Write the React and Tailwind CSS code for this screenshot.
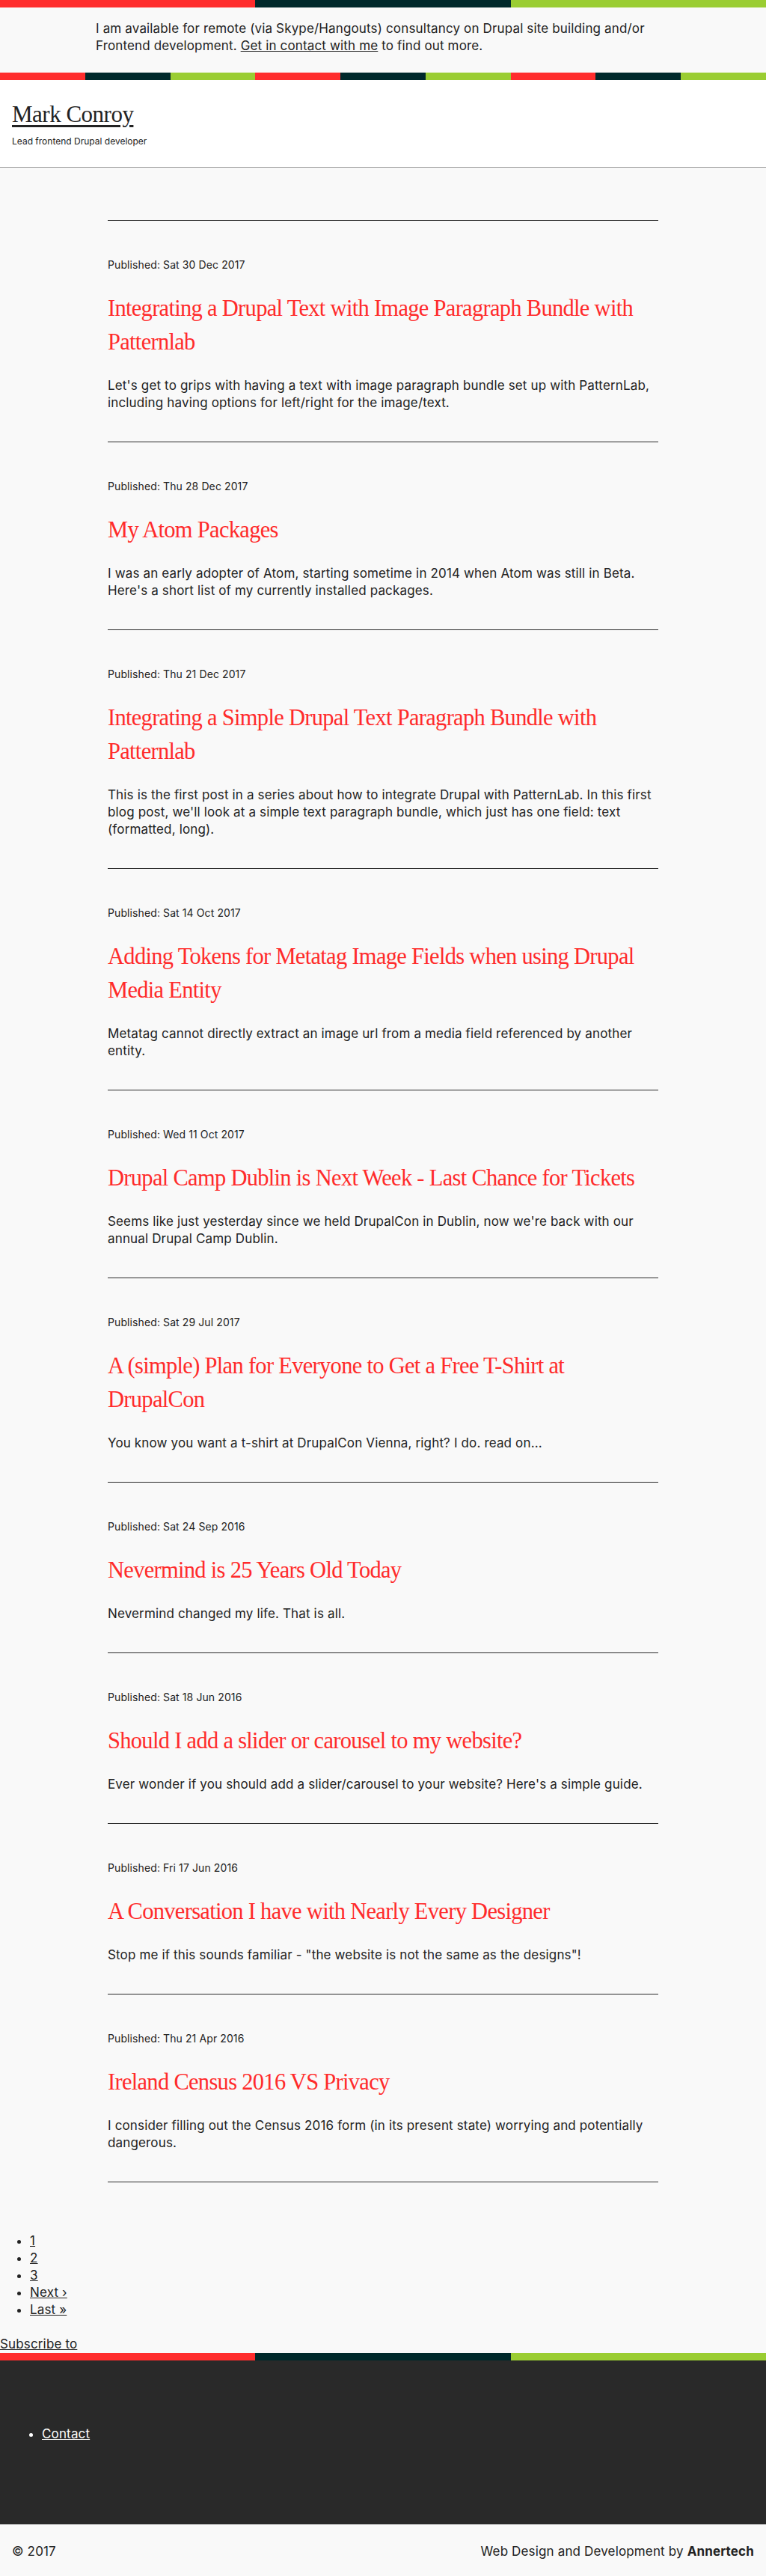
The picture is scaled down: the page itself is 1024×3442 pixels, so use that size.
import React from "react";

const articles = [
  {
    date: "Sat 30 Dec 2017",
    title: "Integrating a Drupal Text with Image Paragraph Bundle with Patternlab",
    body: [
      "Let's get to grips with having a text with image paragraph bundle set up with PatternLab,",
      "including having options for left/right for the image/text.",
    ],
  },
  {
    date: "Thu 28 Dec 2017",
    title: "My Atom Packages",
    body: [
      "I was an early adopter of Atom, starting sometime in 2014 when Atom was still in Beta.",
      "Here's a short list of my currently installed packages.",
    ],
  },
  {
    date: "Thu 21 Dec 2017",
    title: "Integrating a Simple Drupal Text Paragraph Bundle with Patternlab",
    body: [
      "This is the first post in a series about how to integrate Drupal with PatternLab. In this first",
      "blog post, we'll look at a simple text paragraph bundle, which just has one field: text",
      "(formatted, long).",
    ],
  },
  {
    date: "Sat 14 Oct 2017",
    title: "Adding Tokens for Metatag Image Fields when using Drupal Media Entity",
    body: [
      "Metatag cannot directly extract an image url from a media field referenced by another",
      "entity.",
    ],
  },
  {
    date: "Wed 11 Oct 2017",
    title: "Drupal Camp Dublin is Next Week - Last Chance for Tickets",
    body: [
      "Seems like just yesterday since we held DrupalCon in Dublin, now we're back with our",
      "annual Drupal Camp Dublin.",
    ],
  },
  {
    date: "Sat 29 Jul 2017",
    title: "A (simple) Plan for Everyone to Get a Free T-Shirt at DrupalCon",
    body: ["You know you want a t-shirt at DrupalCon Vienna, right? I do. read on..."],
  },
  {
    date: "Sat 24 Sep 2016",
    title: "Nevermind is 25 Years Old Today",
    body: ["Nevermind changed my life. That is all."],
  },
  {
    date: "Sat 18 Jun 2016",
    title: "Should I add a slider or carousel to my website?",
    body: ["Ever wonder if you should add a slider/carousel to your website? Here's a simple guide."],
  },
  {
    date: "Fri 17 Jun 2016",
    title: "A Conversation I have with Nearly Every Designer",
    body: ['Stop me if this sounds familiar - "the website is not the same as the designs"!'],
  },
  {
    date: "Thu 21 Apr 2016",
    title: "Ireland Census 2016 VS Privacy",
    body: [
      "I consider filling out the Census 2016 form (in its present state) worrying and potentially",
      "dangerous.",
    ],
  },
];

function Stripe3() {
  return (
    <div className="flex h-[10px]">
      <div className="flex-1 bg-[#ff2d2d]" />
      <div className="flex-1 bg-[#00292b]" />
      <div className="flex-1 bg-[#9acd32]" />
    </div>
  );
}

function Stripe9() {
  const cls = ["bg-[#ff2d2d]", "bg-[#00292b]", "bg-[#9acd32]"];
  return (
    <div className="grid h-[10px] grid-cols-9">
      {Array.from({ length: 9 }).map((_, i) => (
        <div key={i} className={cls[i % 3]} />
      ))}
    </div>
  );
}

export default function App() {
  return (
    <div className="bg-[#f9f9f9] font-['Inter','Liberation_Sans',sans-serif] text-[17px] leading-[23px] tracking-[0.15px] text-[#222]">
      <Stripe3 />
      <div className="h-[87px] pt-[17px]">
        <p className="mx-auto w-3/4">
          I am available for remote (via Skype/Hangouts) consultancy on Drupal site building and/or
          <br />
          Frontend development.{" "}
          <a href="#" className="underline">
            Get in contact with me
          </a>{" "}
          to find out more.
        </p>
      </div>
      <Stripe9 />
      <header className="h-[117px] border-b border-[#999] bg-white px-4 pt-[28px]">
        <a
          href="#"
          className="block w-fit font-['Liberation_Serif',serif] text-[31px] leading-[36px] tracking-[-0.5px] text-[#222] underline decoration-[3px] underline-offset-[4px]"
        >
          Mark Conroy
        </a>
        <p className="mt-[10px] text-[12px] leading-[16px] tracking-normal">Lead frontend Drupal developer</p>
      </header>

      <main className="pt-[70px]">
        <div className="mx-auto w-[736px] border-b border-[#2a2a2a]">
          {articles.map((a) => (
            <article key={a.title} className="border-t border-[#2a2a2a] pb-[40px] pt-[49px]">
              <p className="text-[14px] leading-[20px] tracking-[0.1px]">Published: {a.date}</p>
              <h2 className="mt-[26px] font-['Liberation_Serif',serif] text-[30.5px] leading-[45px] tracking-[-0.7px] text-[#ff2b2b]">
                <a href="#">{a.title}</a>
              </h2>
              <p className="mt-[24px]">
                {a.body.map((l, i) => (
                  <React.Fragment key={i}>
                    {i > 0 && <br />}
                    {l}
                  </React.Fragment>
                ))}
              </p>
            </article>
          ))}
        </div>

        <ul className="mt-[67px] list-disc pl-10">
          {["1", "2", "3", "Next ›", "Last »"].map((t) => (
            <li key={t}>
              <a href="#" className="underline">
                {t}
              </a>
            </li>
          ))}
        </ul>
        <a href="#" className="mt-[23px] block w-fit underline">
          Subscribe to
        </a>
      </main>

      <footer>
        <Stripe3 />
        <div className="h-[219px] bg-[#292929] px-4 pt-[87px]">
          <ul className="list-disc pl-10 text-white">
            <li>
              <a href="#" className="underline">
                Contact
              </a>
            </li>
          </ul>
        </div>
        <div className="flex h-[69px] items-center justify-between px-4 pt-[3px]">
          <span>© 2017</span>
          <span>
            Web Design and Development by <strong className="font-bold">Annertech</strong>
          </span>
        </div>
      </footer>
    </div>
  );
}
